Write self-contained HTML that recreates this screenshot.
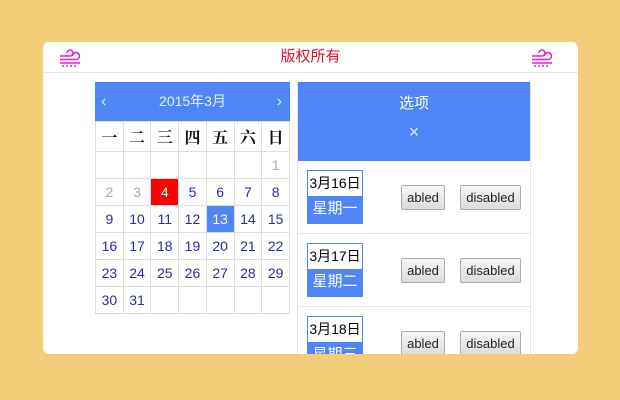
<!DOCTYPE html>
<html><head><meta charset="utf-8"><style>
*{margin:0;padding:0;box-sizing:border-box}
body{width:620px;height:400px;background:#F4CD79;font-family:"Liberation Sans","Noto Sans CJK SC",sans-serif;position:relative;overflow:hidden}
.card{position:absolute;left:43px;top:42px;width:535px;height:312px;background:#fff;border-radius:6px;overflow:hidden}
.hd{height:31px;border-bottom:1px solid #e8e8e8;text-align:center;color:#e0102a;font-size:15px;line-height:30px}
.ic{position:absolute;top:7px}
.cal{position:absolute;left:52px;top:40px;width:195px}
.ch{height:39px;background:#4F86F7;color:#e6eeff;font-size:14px;line-height:39px;text-align:center;position:relative}
.ch span{position:absolute;top:0;font-size:16px}
table{border-collapse:collapse;width:195px}
td{border:1px solid #ddd;height:27px;text-align:center;font-size:14px;color:#2a2aa8;padding:0}
tr.w td{height:30px;color:#111;font-size:16px;font-weight:bold;font-family:"Noto Serif CJK SC",serif}
.g{color:#aaa}.r{background:#f00;color:#fff}.b{background:#4F86F7;color:#fff}
.rp{position:absolute;left:254px;top:40px;width:234px;height:280px;border:1px solid #e5e5e5;border-top:0}
.rh{height:79px;background:#4F86F7;color:#fff;text-align:center;font-size:15px}
.it{height:73px;border-bottom:1px solid #e5e5e5;position:relative}
.d{position:absolute;left:9px;top:9px;width:56px;height:54px;border:1px solid #4F86F7;font-size:14px}
.d div:first-child{height:25px;line-height:25px;color:#000;text-align:center}
.d div:last-child{height:27px;background:#4F86F7;color:#fff;line-height:26px;text-align:center;font-size:15px}
.bt{position:absolute;top:24px;height:25px;border:1px solid #aaa;border-radius:2px;background:linear-gradient(#f6f6f6,#dcdcdc);font-size:13px;line-height:23px;text-align:center;color:#222}
</style></head><body>
<div class="card">
<div class="hd">版权所有</div>
<svg class="ic" style="left:14px" width="26" height="20" viewBox="0 0 26 20" fill="none" stroke="#e020d0" stroke-width="1.5"><path d="M3 7h10a3 3 0 1 0-3-3"/><path d="M3 10.5h16a3.5 3.5 0 1 0-3.5-3.5"/><path d="M3 14h20"/><path d="M5 17h15" stroke-dasharray="2 2"/></svg>
<svg class="ic" style="left:486px" width="26" height="20" viewBox="0 0 26 20" fill="none" stroke="#e020d0" stroke-width="1.5"><path d="M3 7h10a3 3 0 1 0-3-3"/><path d="M3 10.5h16a3.5 3.5 0 1 0-3.5-3.5"/><path d="M3 14h20"/><path d="M5 17h15" stroke-dasharray="2 2"/></svg>
<div class="cal">
<div class="ch"><span style="left:6px">&lsaquo;</span>2015年3月<span style="right:8px">&rsaquo;</span></div>
<table>
<tr class="w"><td>一</td><td>二</td><td>三</td><td>四</td><td>五</td><td>六</td><td>日</td></tr>
<tr><td></td><td></td><td></td><td></td><td></td><td></td><td class="g">1</td></tr>
<tr><td class="g">2</td><td class="g">3</td><td class="r">4</td><td>5</td><td>6</td><td>7</td><td>8</td></tr>
<tr><td>9</td><td>10</td><td>11</td><td>12</td><td class="b">13</td><td>14</td><td>15</td></tr>
<tr><td>16</td><td>17</td><td>18</td><td>19</td><td>20</td><td>21</td><td>22</td></tr>
<tr><td>23</td><td>24</td><td>25</td><td>26</td><td>27</td><td>28</td><td>29</td></tr>
<tr><td>30</td><td>31</td><td></td><td></td><td></td><td></td><td></td></tr>
</table></div>
<div class="rp">
<div class="rh"><div style="padding-top:10px;height:40px">选项</div><div style="font-size:18px;color:#dfe9ff">×</div></div>
<div class="it"><div class="d"><div>3月16日</div><div>星期一</div></div><div class="bt" style="left:103px;width:44px">abled</div><div class="bt" style="left:162px;width:61px">disabled</div></div>
<div class="it"><div class="d"><div>3月17日</div><div>星期二</div></div><div class="bt" style="left:103px;width:44px">abled</div><div class="bt" style="left:162px;width:61px">disabled</div></div>
<div class="it"><div class="d"><div>3月18日</div><div>星期三</div></div><div class="bt" style="left:103px;width:44px">abled</div><div class="bt" style="left:162px;width:61px">disabled</div></div>
</div>
</div>
</body></html>
